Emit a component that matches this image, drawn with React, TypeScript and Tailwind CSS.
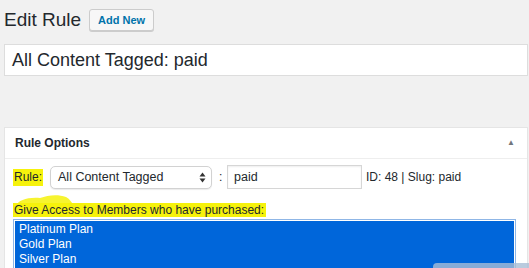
import React from 'react'

const plans = ['Platinum Plan', 'Gold Plan', 'Silver Plan']

// up/down arrows used by the mac-style select
const SelectArrows = () => (
  <svg width="7" height="11" viewBox="0 0 7 11" className="shrink-0">
    <path d="M3.5 0.5 L6.5 4.5 L0.5 4.5 Z" fill="#333" />
    <path d="M3.5 10.5 L6.5 6.5 L0.5 6.5 Z" fill="#333" />
  </svg>
)

export default function App() {
  return (
    <div
      className="relative w-full h-[268px] overflow-hidden bg-[#f1f1f1] pl-[4px] pr-px text-[#23282d]"
      style={{ fontFamily: '"Liberation Sans", Arial, sans-serif' }}
    >
      {/* page title row */}
      <div className="flex items-center pt-[9px] gap-[8px]">
        <h1 className="text-[19px] leading-[22px] font-normal">Edit Rule</h1>
        <button className="h-[22px] px-[8px] rounded-[3px] border border-[#cccccc] bg-[#f7f7f7] text-[11px] font-bold text-[#0073aa] shadow-[0_1px_0_#ccc]">
          Add New
        </button>
      </div>

      {/* title input */}
      <div className="mt-[13px] h-[32px] border border-[#dddddd] bg-white flex items-center px-[7px] text-[18px]">
        All Content Tagged: paid
      </div>

      {/* Rule Options metabox */}
      <div className="mt-[51px] border border-[#e5e5e5] bg-white">
        <div className="h-[31px] border-b border-[#eeeeee] flex items-center justify-between pl-[10px] pr-[12px]">
          <span className="text-[12px] font-bold">Rule Options</span>
          <span className="text-[8px] text-[#72777c]">▲</span>
        </div>

        <div className="pl-[8px] pt-[6px]">
          <div className="flex items-center text-[12px]">
            <span className="bg-[#f6f20c] px-[1px] leading-[17px]">Rule:</span>
            <div className="ml-[7px] w-[162px] h-[23px] rounded-[5px] border border-[#d2d2d2] bg-white flex items-center justify-between pl-[7px] pr-[5px] text-[12.5px] shadow-[0_1px_1px_rgba(0,0,0,0.08)]">
              <span>All Content Tagged</span>
              <SelectArrows />
            </div>
            <span className="ml-[7px] w-[8px]">:</span>
            <div className="w-[135px] h-[24px] border border-[#d6d6d6] bg-white flex items-center px-[6px] text-[12.5px] shadow-[inset_0_1px_2px_rgba(0,0,0,0.07)]">
              paid
            </div>
            <span className="ml-[4px]">ID: 48 | Slug: paid</span>
          </div>

          <div className="relative mt-[14px] text-[12px] leading-[15px]">
            <svg
              className="absolute left-[1px] -top-[11px]"
              width="60"
              height="14"
              viewBox="0 0 60 14"
            >
              <path
                d="M2 14 C4 8 14 5 26 6 C34 3 44 2 52 5 C56 7 58 11 60 14 Z"
                fill="#f6f20c"
                opacity="0.85"
              />
            </svg>
            <span className="relative bg-[#f6f20c] pl-[1px] pr-[2px]">
              Give Access to Members who have purchased:
            </span>
          </div>

          <div className="mt-px mr-[11px] border border-[#8fb6e6] p-px bg-white h-[60px]">
            <div className="h-full bg-[#0066da] pl-[4px] pt-px text-white text-[12px] leading-[15px]">
              {plans.map((p) => (
                <div key={p}>{p}</div>
              ))}
            </div>
          </div>
        </div>
      </div>

      {/* partially visible scroll handle over the bottom edge */}
      <div className="absolute left-[433px] top-[263px] w-[100px] h-[8px] rounded-tl-[4px] bg-[#a9bed6] opacity-80" />
    </div>
  )
}
